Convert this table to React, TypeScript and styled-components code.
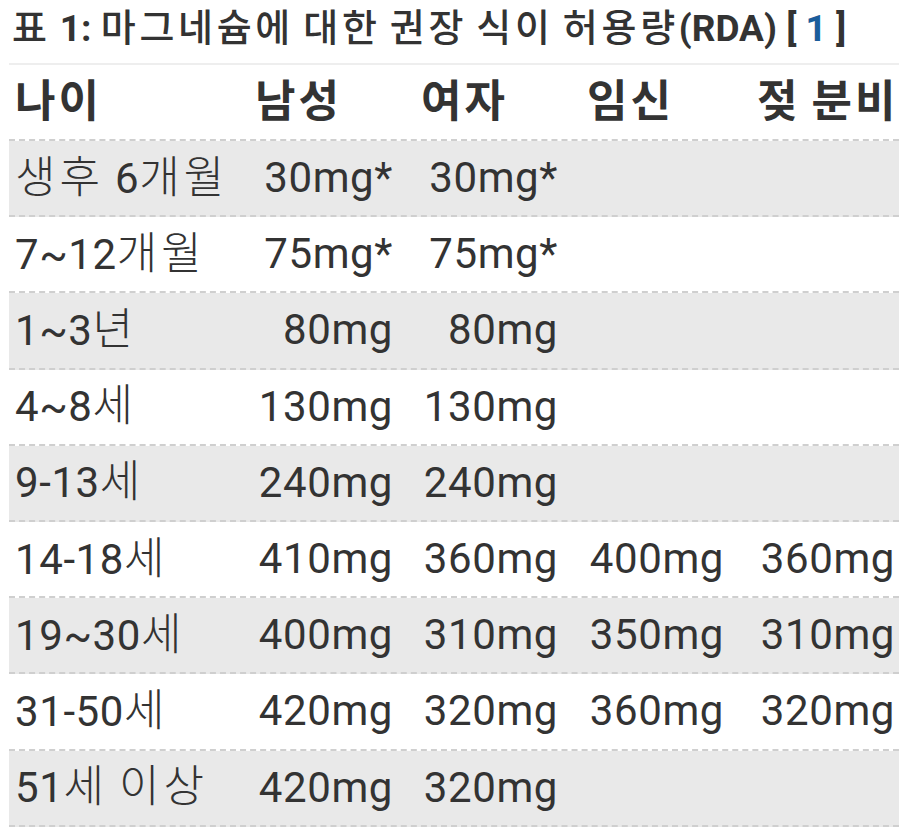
import React from "react";
import styled, { createGlobalStyle } from "styled-components";

const Global = createGlobalStyle`
  html, body { margin: 0; padding: 0; background: #ffffff; }
  body { font-family: Roboto, "Noto Sans CJK KR", sans-serif; color: #333333; }
`;

const Page = styled.div`
  padding: 0 12px 0 9px;
  width: 911px;
  box-sizing: border-box;
`;

const Caption = styled.div`
  font-size: 37px;
  font-weight: 700;
  line-height: 50px;
  margin: 3px 0 9px 3px;
  color: #333333;
  white-space: nowrap;
`;

const Ref = styled.span`
  color: #1b5d9b;
`;

const Hangul = styled.span<{ $size: number; $space: number; $weight?: number }>`
  font-size: ${(p) => p.$size}px;
  letter-spacing: ${(p) => p.$space}px;
  ${(p) => (p.$weight ? `font-weight: ${p.$weight};` : "")}
`;

const Table = styled.div`
  border-top: 2px solid #eeeeee;
  display: flex;
  flex-direction: column;
`;

const Row = styled.div<{ $shade?: boolean; $head?: boolean }>`
  display: grid;
  grid-template-columns: 232px 166px 165px 169px 158px;
  align-items: center;
  height: ${(p) => (p.$head ? "76px" : "76.2px")};
  box-sizing: border-box;
  border-bottom: 2px dashed #cfcfcf;
  background: ${(p) => (p.$shade ? "#e9e9e9" : "#ffffff")};
  font-size: 42px;
  font-weight: ${(p) => (p.$head ? 700 : 400)};
  letter-spacing: 0.6px;
  line-height: 50px;
  white-space: nowrap;
`;

const pads = [
  "0 0 0 6px",
  "0 14px 0 14px",
  "0 14px 0 14px",
  "0 17px 0 15px",
  "0 4px 0 16px",
];

const Cell = styled.div<{ $col: number; $right?: boolean }>`
  padding: ${(p) => pads[p.$col]};
  text-align: ${(p) => (p.$right ? "right" : "left")};
`;

const isHangul = (ch: string) => /[\uAC00-\uD7A3]/.test(ch);

function Mixed({ text, size, space, weight }: { text: string; size: number; space: number; weight?: number }) {
  const parts: { ko: boolean; s: string }[] = [];
  for (const ch of Array.from(text)) {
    const ko = isHangul(ch);
    const last = parts[parts.length - 1];
    if (last && last.ko === ko) last.s += ch;
    else parts.push({ ko, s: ch });
  }
  return (
    <>
      {parts.map((p, i) =>
        p.ko ? (
          <Hangul key={i} $size={size} $space={space} $weight={weight}>
            {p.s}
          </Hangul>
        ) : (
          <React.Fragment key={i}>{p.s}</React.Fragment>
        )
      )}
    </>
  );
}

const head = ["나이", "남성", "여자", "임신", "젖 분비"];

const rows: string[][] = [
  ["생후 6개월", "30mg*", "30mg*", "", ""],
  ["7~12개월", "75mg*", "75mg*", "", ""],
  ["1~3년", "80mg", "80mg", "", ""],
  ["4~8세", "130mg", "130mg", "", ""],
  ["9-13세", "240mg", "240mg", "", ""],
  ["14-18세", "410mg", "360mg", "400mg", "360mg"],
  ["19~30세", "400mg", "310mg", "350mg", "310mg"],
  ["31-50세", "420mg", "320mg", "360mg", "320mg"],
  ["51세 이상", "420mg", "320mg", "", ""],
];

export default function App() {
  return (
    <Page>
      <Global />
      <Caption>
        <Mixed text="표 1: 마그네슘에 대한 권장 식이 허용량(RDA) [ " size={38} space={3.7} weight={500} />
        <Ref>1</Ref> ]
      </Caption>
      <Table>
        <Row $head>
          {head.map((h, i) => (
            <Cell key={i} $col={i}>
              <Mixed text={h} size={44} space={3} />
            </Cell>
          ))}
        </Row>
        {rows.map((r, ri) => (
          <Row key={ri} $shade={ri % 2 === 0}>
            {r.map((c, ci) => (
              <Cell key={ci} $col={ci} $right={ci > 0}>
                <Mixed text={c} size={44} space={4} weight={300} />
              </Cell>
            ))}
          </Row>
        ))}
      </Table>
    </Page>
  );
}
